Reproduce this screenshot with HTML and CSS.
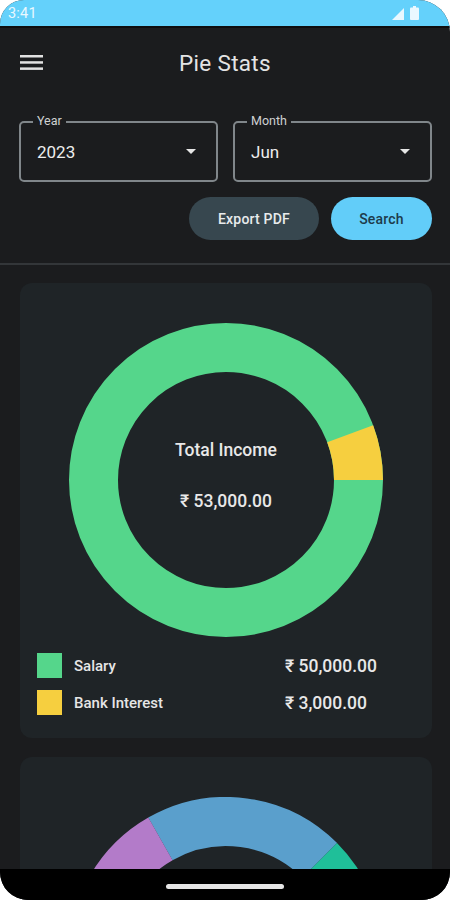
FILE: index.html
```html
<!DOCTYPE html>
<html>
<head>
<meta charset="utf-8">
<link rel="stylesheet" href="styles.css">
</head>
<body>
<div class="device">
  <div class="status">
    <span class="time">3:41</span>
    <div class="status-icons">
      <svg width="12" height="12" viewBox="0 0 12 12"><polygon points="12,0 12,12 0,12" fill="#eaf8ff"/></svg>
      <svg width="9" height="14" viewBox="0 0 9 14"><rect x="3" y="0" width="3" height="2" fill="#eaf8ff"/><rect x="0" y="1.5" width="9" height="12.5" rx="1" fill="#eaf8ff"/></svg>
    </div>
  </div>
  <header class="appbar">
    <svg class="menu" width="23" height="15" viewBox="0 0 23 15"><rect x="0" y="0" width="23" height="2.5" fill="#e2e2e2"/><rect x="0" y="6.2" width="23" height="2.5" fill="#e2e2e2"/><rect x="0" y="12.4" width="23" height="2.5" fill="#e2e2e2"/></svg>
    <h1 class="title">Pie Stats</h1>
  </header>
  <div class="filters">
    <div class="field">
      <span class="field-label">Year</span>
      <span class="field-value">2023</span>
      <span class="caret"></span>
    </div>
    <div class="field">
      <span class="field-label">Month</span>
      <span class="field-value">Jun</span>
      <span class="caret"></span>
    </div>
  </div>
  <div class="actions">
    <button class="btn btn-export">Export PDF</button>
    <button class="btn btn-search">Search</button>
  </div>
  <div class="divider"></div>
  <main class="content">
    <section class="card">
      <div class="chart">
        <svg width="314" height="314" viewBox="0 0 314 314">
          <circle cx="157" cy="157" r="132.5" fill="none" stroke="#55d68b" stroke-width="49"/>
          <circle cx="157" cy="157" r="132.5" fill="none" stroke="#f6cf3f" stroke-width="49" stroke-dasharray="47.2 1000" transform="rotate(-20.4 157 157)"/>
        </svg>
        <div class="chart-center">
          <span class="chart-title">Total Income</span>
          <span class="chart-amount">₹ 53,000.00</span>
        </div>
      </div>
      <div class="legend">
        <span class="swatch swatch-green"></span>
        <span class="legend-label">Salary</span>
        <span class="legend-value">₹ 50,000.00</span>
        <span class="swatch swatch-yellow"></span>
        <span class="legend-label">Bank Interest</span>
        <span class="legend-value">₹ 3,000.00</span>
      </div>
    </section>
    <section class="card">
      <div class="chart">
        <svg width="314" height="314" viewBox="0 0 314 314">
          <circle cx="157" cy="157" r="132.5" fill="none" stroke="#5a9fcc" stroke-width="49" stroke-dasharray="172.8 1000" transform="rotate(-119.7 157 157)"/>
          <circle cx="157" cy="157" r="132.5" fill="none" stroke="#b37bc9" stroke-width="49" stroke-dasharray="138.8 1000" transform="rotate(-179.7 157 157)"/>
          <circle cx="157" cy="157" r="132.5" fill="none" stroke="#1fbf99" stroke-width="49" stroke-dasharray="104 1000" transform="rotate(-45 157 157)"/>
        </svg>
      </div>
    </section>
  </main>
  <div class="navbar"><span class="home"></span></div>
</div>
</body>
</html>
```

FILE: styles.css
```css
* { box-sizing: border-box; }
html, body { margin: 0; padding: 0; background: #ffffff; }
body { font-family: Roboto, "Noto Sans", "DejaVu Sans", sans-serif; }

.device {
  position: relative;
  width: 450px;
  height: 900px;
  overflow: hidden;
  background: #1b1c1e;
  border-radius: 24px 32px 28px 28px;
  display: flex;
  flex-direction: column;
}

.status {
  flex: none;
  height: 28px;
  background: #64d1fb;
  border-bottom: 2px solid #0e0e0f;
  display: flex;
  align-items: center;
  justify-content: space-between;
  padding: 0 31px 0 8px;
}
.time { color: #eaf8ff; font-size: 14.5px; letter-spacing: 0.2px; }
.status-icons { display: flex; align-items: flex-end; gap: 6px; padding-bottom: 1px; }

.appbar {
  flex: none;
  position: relative;
  height: 70px;
  display: flex;
  align-items: center;
  justify-content: center;
}
.menu { position: absolute; left: 20px; top: 27px; }
.title { margin: 0; font-size: 22.5px; font-weight: 400; color: #e4e4e4; letter-spacing: 0.3px; }

.filters {
  flex: none;
  margin-top: 23px;
  padding: 0 18px 0 19px;
  display: grid;
  grid-template-columns: 1fr 1fr;
  gap: 15px;
}
.field {
  position: relative;
  height: 61px;
  border: 2px solid #80868a;
  border-radius: 5px;
  display: flex;
  align-items: center;
  padding: 0 20px 0 16px;
}
.field-label {
  position: absolute;
  top: -9px;
  left: 12px;
  padding: 0 4px;
  background: #1b1c1e;
  color: #cfd1d2;
  font-size: 12.5px;
  line-height: 14px;
}
.field-value { flex: 1; color: #ededed; font-size: 17px; }
.caret {
  width: 0; height: 0;
  border-left: 5px solid transparent;
  border-right: 5px solid transparent;
  border-top: 5px solid #e6e6e6;
}

.actions {
  flex: none;
  margin-top: 15px;
  padding: 0 18px;
  display: flex;
  justify-content: flex-end;
  gap: 12px;
}
.btn {
  height: 43px;
  border: none;
  border-radius: 22px;
  font-family: Roboto, "Noto Sans", sans-serif;
  font-size: 14px;
  font-weight: 500;
  letter-spacing: 0.2px;
}
.btn-export { width: 130px; background: #37474f; color: #e8ebec; }
.btn-search { width: 101px; background: #62cdf9; color: #1d3b4b; }

.divider { flex: none; margin-top: 23px; height: 2px; background: #333639; }

.content {
  flex: 1;
  padding: 18px 18px 0 20px;
  display: flex;
  flex-direction: column;
  gap: 19px;
}
.card {
  flex: none;
  background: #1f2427;
  border-radius: 12px;
  padding: 40px 17px 23px;
}
.chart {
  position: relative;
  width: 314px;
  height: 314px;
  margin: 0 auto 0 32px;
}
.chart svg { display: block; }
.chart-center {
  position: absolute;
  inset: 0;
  display: flex;
  flex-direction: column;
  align-items: center;
  justify-content: center;
  gap: 31px;
  padding-bottom: 10px;
  color: #e8e8e8;
  font-size: 17.5px;
  font-weight: 500;
}
.chart-amount { font-weight: 500; }

.legend {
  margin-top: 16px;
  display: grid;
  grid-template-columns: 25px 199px auto;
  column-gap: 12px;
  row-gap: 12px;
  align-items: center;
}
.swatch { width: 25px; height: 25px; }
.swatch-green { background: #55d68b; }
.swatch-yellow { background: #f6cf3f; }
.legend-label { color: #e6e6e6; font-size: 15px; font-weight: 500; }
.legend-value { color: #e8e8e8; font-size: 17.5px; font-weight: 500; }

.navbar {
  position: absolute;
  left: 0; right: 0; bottom: 0;
  height: 31px;
  background: #000000;
  display: flex;
  justify-content: center;
  padding-top: 15px;
}
.home { width: 118px; height: 5px; border-radius: 3px; background: #e6e6e6; }
```
